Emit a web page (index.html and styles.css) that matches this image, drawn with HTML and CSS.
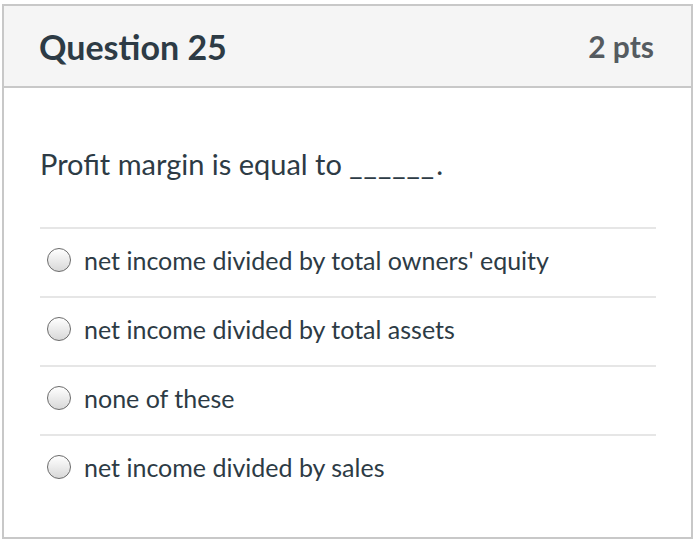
FILE: index.html
```html
<!DOCTYPE html>
<html>
<head>
<meta charset="utf-8">
<link rel="stylesheet" href="styles.css">
</head>
<body>
<div class="card">
  <div class="header">
    <div class="title">Question 25</div>
    <div class="pts">2 pts</div>
  </div>
  <div class="content">
    <div class="question">Profit margin is equal to <span class="blank">______</span>.</div>
    <div class="answers">
      <div class="answer"><span class="radio"></span><span class="label">net income divided by total owners' equity</span></div>
      <div class="answer"><span class="radio"></span><span class="label">net income divided by total assets</span></div>
      <div class="answer"><span class="radio"></span><span class="label">none of these</span></div>
      <div class="answer"><span class="radio"></span><span class="label">net income divided by sales</span></div>
    </div>
  </div>
</div>
</body>
</html>
```

FILE: styles.css
```css
html, body {
  margin: 0;
  padding: 0;
  background: #ffffff;
}
body {
  font-family: Lato, "Open Sans", sans-serif;
  color: #2d3b45;
}
.card {
  margin: 4px 0 0 2px;
  width: 691px;
  height: 535px;
  border: 2px solid #c8c8c8;
  box-sizing: border-box;
  display: flex;
  flex-direction: column;
}
.header {
  height: 82px;
  box-sizing: border-box;
  background: #f5f5f5;
  border-bottom: 2px solid #c8c8c8;
  display: flex;
  align-items: center;
  justify-content: space-between;
  padding: 0 37px 0 35px;
}
.title {
  font-size: 34px;
  font-weight: 700;
  color: #2d3b45;
}
.pts {
  font-size: 30px;
  font-weight: 700;
  color: #555b60;
}
.content {
  padding: 56px 35px 0 36px;
}
.question {
  font-size: 29px;
  line-height: 40px;
  height: 40px;
  margin-bottom: 43px;
}
.blank {
  letter-spacing: 1px;
  margin-right: 1px;
}
.answer {
  height: 69px;
  border-top: 2px solid #e6e6e6;
  box-sizing: border-box;
  display: flex;
  align-items: center;
  padding: 0 0 5px 7px;
}
.radio {
  width: 22px;
  height: 22px;
  border: 1.5px solid #6b6b6b;
  border-radius: 50%;
  background: linear-gradient(#ffffff, #d8d8d8);
  margin-right: 13px;
  flex: none;
}
.label {
  font-size: 25px;
}
```
